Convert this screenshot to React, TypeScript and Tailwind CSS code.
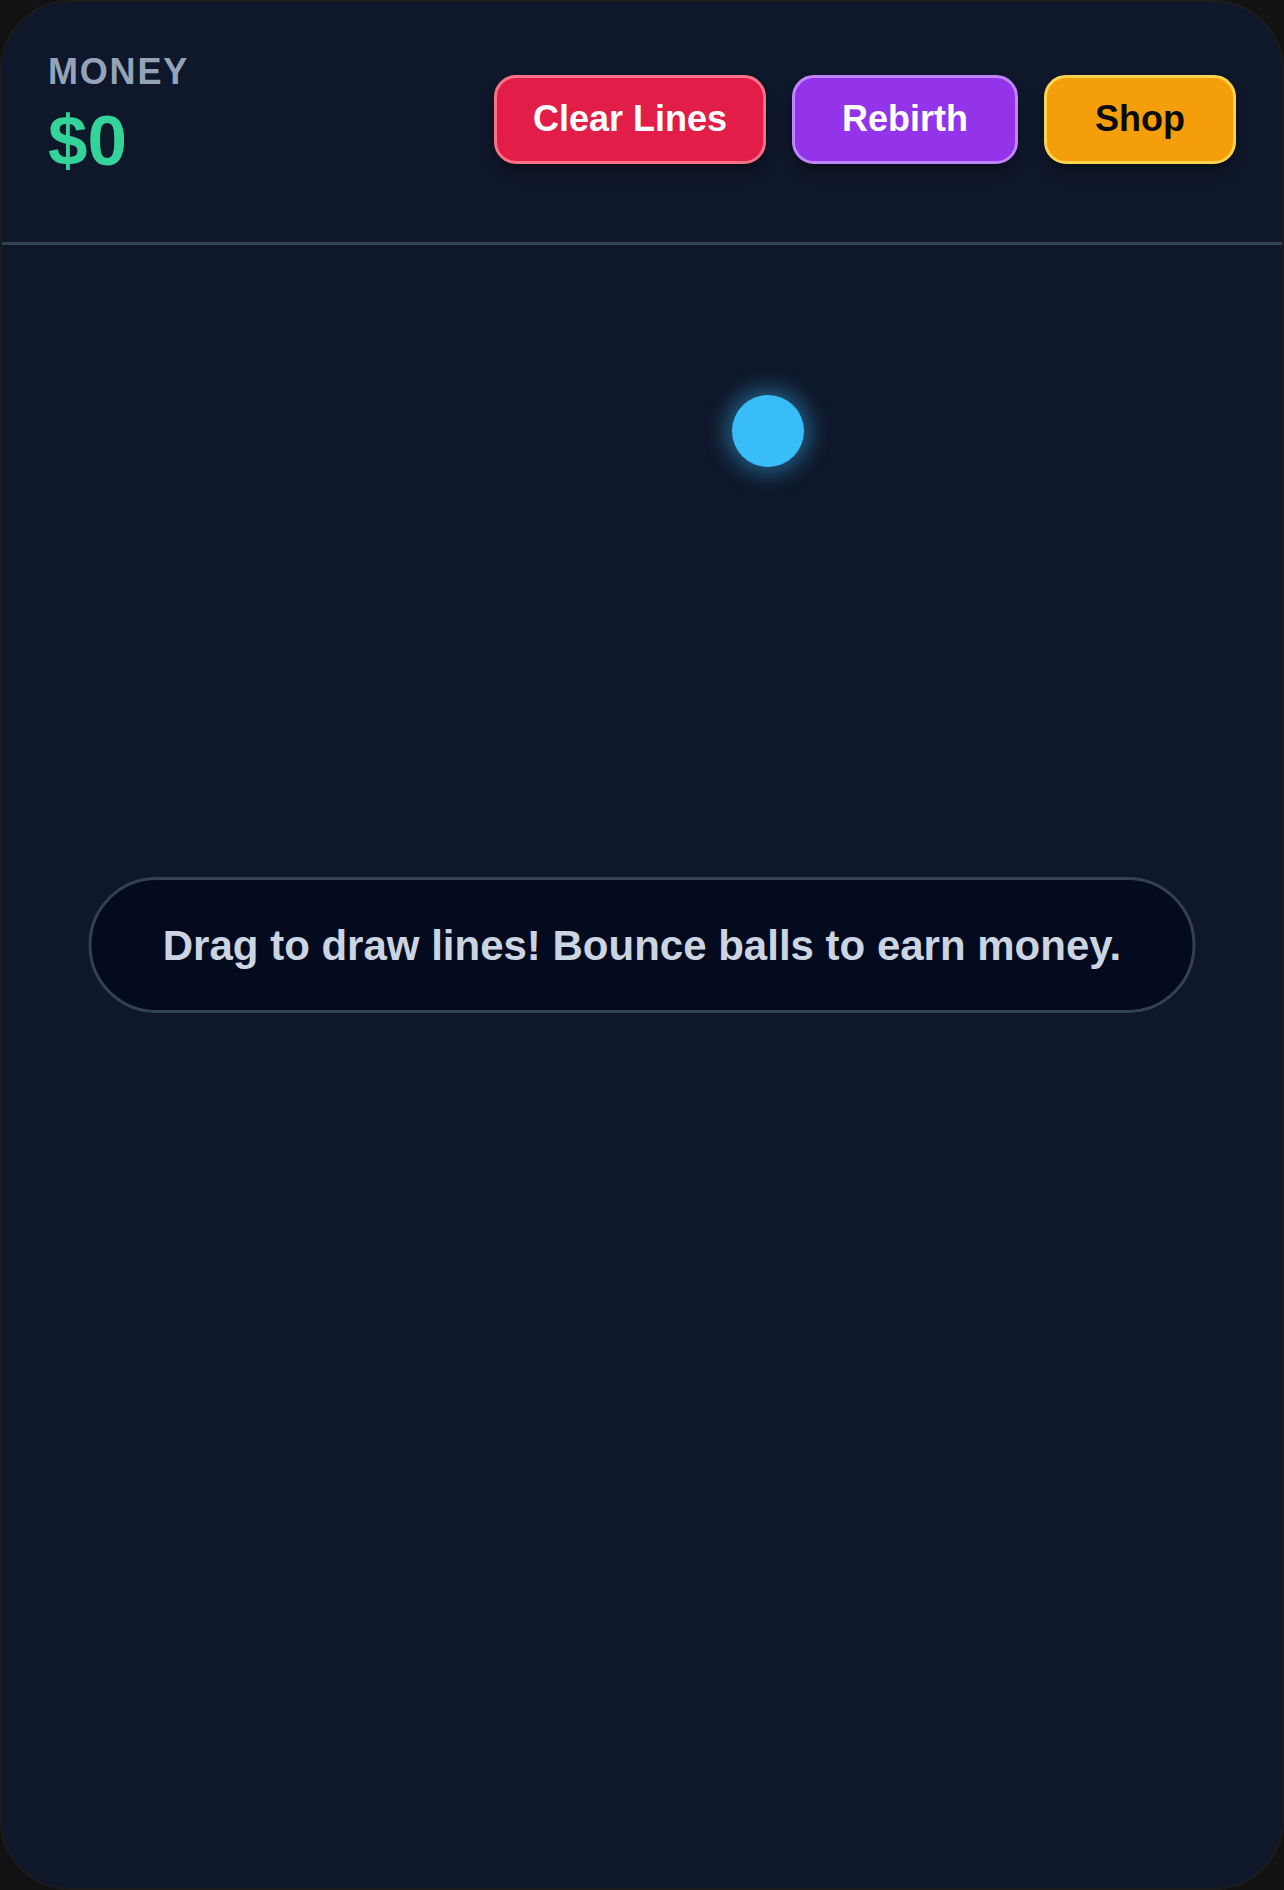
import React from "react";

const font = { fontFamily: '"Liberation Sans", Arial, sans-serif' };

function GameButton({
  label,
  className,
}: {
  label: string;
  className: string;
}) {
  return (
    <button
      className={`h-[89px] rounded-[22px] border-[3px] text-[36px] font-bold leading-none shadow-lg shadow-black/30 flex items-center justify-center ${className}`}
    >
      {label}
    </button>
  );
}

export default function App() {
  return (
    <div className="w-[1284px] h-[1890px] bg-[#121212]" style={font}>
      <div className="relative w-full h-full bg-[#0f172a] rounded-[70px] border-2 border-[#1c1c1c] overflow-hidden flex flex-col">
        {/* Header */}
        <header className="h-[243px] shrink-0 border-b-[3px] border-[#334155] px-[46px] flex items-center justify-between">
          <div className="flex flex-col gap-[13px] pb-[17px]">
            <span className="text-[36px] leading-[40px] font-bold tracking-wider text-[#94a3b8]">
              MONEY
            </span>
            <span className="text-[71px] leading-none font-bold text-[#34d399]">$0</span>
          </div>
          <div className="flex items-center gap-[26px] pb-[6px]">
            <GameButton label="Clear Lines" className="w-[272px] bg-[#e11d48] border-[#fb7185] text-white" />
            <GameButton label="Rebirth" className="w-[226px] bg-[#9333ea] border-[#c084fc] text-white" />
            <GameButton label="Shop" className="w-[192px] bg-[#f59e0b] border-[#fcd34d] text-[#0a0a0a]" />
          </div>
        </header>

        {/* Play field */}
        <main className="relative flex-1">
          <div className="absolute left-[730px] top-[150px] w-[72px] h-[72px] rounded-full bg-[#38bdf8] shadow-[0_0_22px_6px_rgba(56,189,248,0.45)]" />
          <div className="absolute left-1/2 -translate-x-1/2 top-[632px] w-[1107px] h-[136px] rounded-full border-[3px] border-[#334155] bg-[#050b1e] flex items-center justify-center">
            <p className="text-[42px] font-bold text-[#cbd5e1] whitespace-nowrap">
              Drag to draw lines! Bounce balls to earn money.
            </p>
          </div>
        </main>
      </div>
    </div>
  );
}
